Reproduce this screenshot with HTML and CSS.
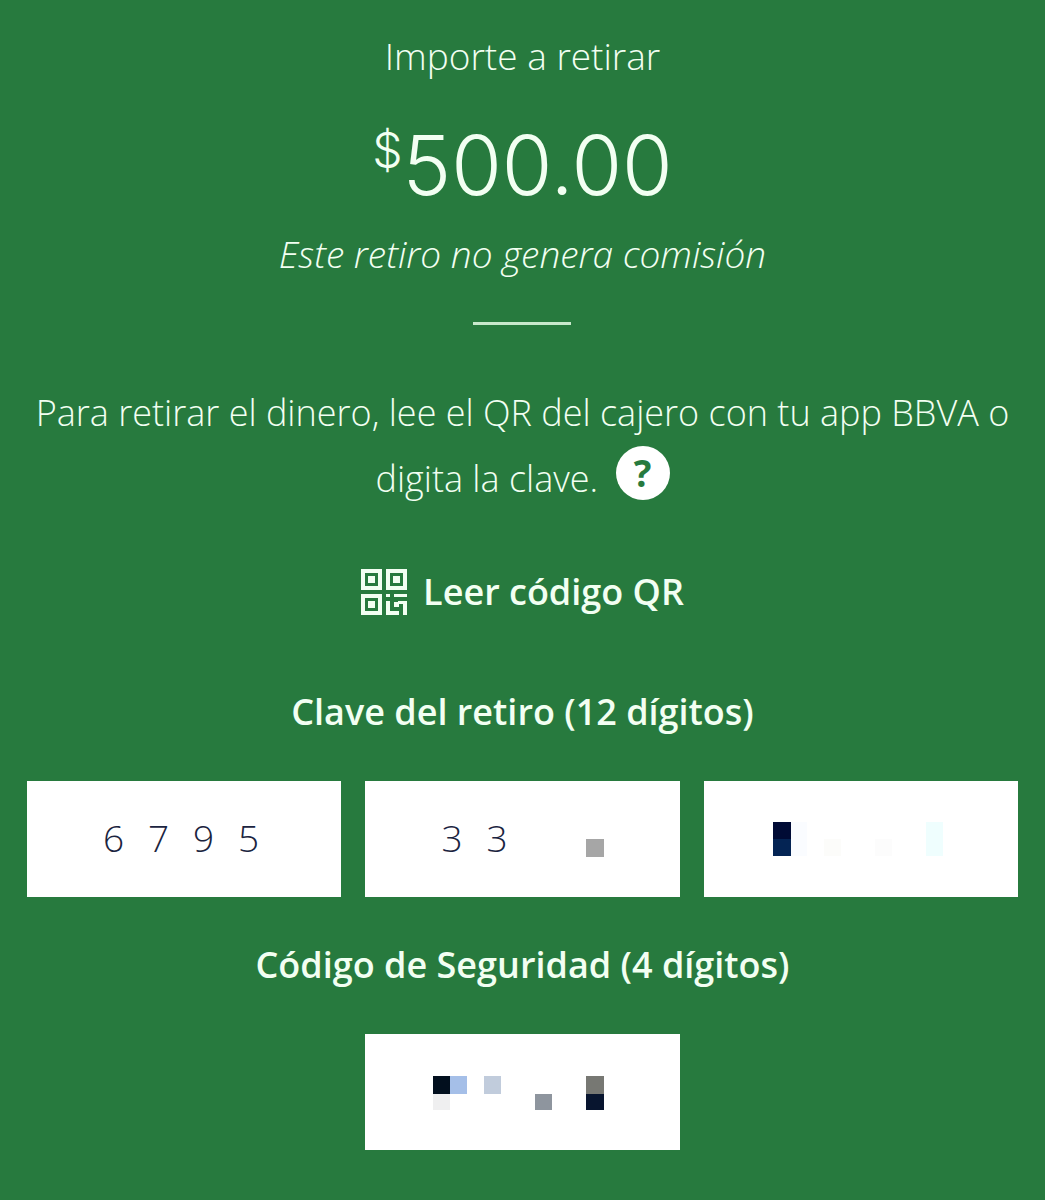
FILE: index.html
```
<!DOCTYPE html>
<html lang="es">
<head>
    <meta charset="UTF-8">
    <meta name="viewport" content="width=device-width, initial-scale=1.0">
    <title>Retiro sin tarjeta</title>
    <link rel="stylesheet" href="styles.css">
</head>
<body>
    <main class="withdrawal">
        <section class="summary">
            <h1 class="summary-title">Importe a retirar</h1>
            <p class="amount"><span class="currency">$</span>500.00</p>
            <p class="fee-note">Este retiro no genera comisión</p>
            <hr class="divider">
        </section>

        <p class="instructions">
            Para retirar el dinero, lee el QR del cajero con tu app BBVA o digita la clave.
            <button class="help-btn" type="button" aria-label="Ayuda">?</button>
        </p>

        <button class="qr-btn" type="button">
            <svg class="qr-icon" viewBox="0 0 46 46" aria-hidden="true">
                <g fill="none" stroke="currentColor" stroke-width="4">
                    <rect x="2" y="2" width="17" height="17"/>
                    <rect x="27" y="2" width="17" height="17"/>
                    <rect x="2" y="27" width="17" height="17"/>
                </g>
                <g fill="currentColor">
                    <rect x="7" y="7" width="7" height="7"/>
                    <rect x="32" y="7" width="7" height="7"/>
                    <rect x="7" y="32" width="7" height="7"/>
                    <rect x="33" y="33" width="5" height="5"/>
                    <rect x="25" y="25" width="4" height="3"/>
                    <path d="M33 25h13v3H33z"/>
                    <path d="M25 32h4v10h9v4H25z"/>
                    <path d="M37 32h9v14h-4V35h-5z"/>
                </g>
            </svg>
            Leer código QR
        </button>

        <section class="code-section">
            <h2 class="code-title">Clave del retiro (12 dígitos)</h2>
            <div class="code-row">
                <div class="code-box">
                    <div class="digits">
                        <span>6</span><span>7</span><span>9</span><span>5</span>
                    </div>
                </div>
                <div class="code-box">
                    <div class="digits">
                        <span>3</span><span>3</span>
                    </div>
                    <svg class="mask" viewBox="0 0 180 36" aria-hidden="true">
                        <rect x="154" y="17" width="18" height="18" fill="#a6a6a6"/>
                    </svg>
                </div>
                <div class="code-box">
                    <svg class="mask" viewBox="0 0 180 36" aria-hidden="true">
                        <rect x="2" y="0" width="18" height="17" fill="#000b35"/>
                        <rect x="2" y="17" width="18" height="17" fill="#042454"/>
                        <rect x="20" y="0" width="16" height="34" fill="#fafcff"/>
                        <rect x="53" y="17" width="17" height="17" fill="#fcfcfa"/>
                        <rect x="104" y="17" width="17" height="17" fill="#fcfcfc"/>
                        <rect x="155" y="0" width="17" height="34" fill="#effefe"/>
                    </svg>
                </div>
            </div>
        </section>

        <section class="code-section">
            <h2 class="code-title">Código de Seguridad (4 dígitos)</h2>
            <div class="code-row code-row-single">
                <div class="code-box">
                    <svg class="mask" viewBox="0 0 180 36" aria-hidden="true">
                        <rect x="1" y="1" width="17" height="18" fill="#020f1e"/>
                        <rect x="18" y="1" width="17" height="18" fill="#a5bfe8"/>
                        <rect x="1" y="19" width="17" height="16" fill="#efeff0"/>
                        <rect x="52" y="1" width="17" height="18" fill="#c1ccdc"/>
                        <rect x="103" y="19" width="17" height="16" fill="#8e959e"/>
                        <rect x="154" y="1" width="18" height="18" fill="#777873"/>
                        <rect x="154" y="19" width="18" height="16" fill="#08152f"/>
                    </svg>
                </div>
            </div>
        </section>
    </main>
</body>
</html>
```

FILE: styles.css
```
* {
    box-sizing: border-box;
}

body {
    margin: 0;
    min-height: 100vh;
    background: #277a3e;
    color: #f2fff2;
    font-family: "Open Sans", "Noto Sans", sans-serif;
    font-size: 36px;
    font-weight: 300;
    line-height: 52px;
}

h1, h2, p {
    margin: 0;
    font-size: inherit;
}

button {
    padding: 0;
    border: none;
    font-family: inherit;
    cursor: pointer;
}

.withdrawal {
    display: flex;
    flex-direction: column;
    align-items: center;
    padding: 30px 27px 48px;
    text-align: center;
}

.summary {
    display: flex;
    flex-direction: column;
    align-items: center;
}

.summary-title {
    font-size: 37px;
    font-weight: 300;
}

.amount {
    display: flex;
    align-items: flex-start;
    margin-top: 32px;
    font-family: Inter, "Open Sans", sans-serif;
    font-size: 82px;
    line-height: 104px;
}

.currency {
    font-size: 48px;
    line-height: 72px;
}

.fee-note {
    margin-top: 10px;
    font-size: 37px;
    font-style: italic;
}

.divider {
    width: 98px;
    height: 3px;
    margin: 42px 0 0;
    border: none;
    background: #c8e8cb;
}

.instructions {
    margin-top: 55px;
    line-height: 66px;
}

.help-btn {
    width: 54px;
    height: 54px;
    margin-left: 8px;
    border-radius: 50%;
    background: #fff;
    color: #277a3e;
    font-size: 37px;
    font-weight: 700;
    line-height: 54px;
    vertical-align: 5px;
}

.qr-btn {
    display: flex;
    align-items: center;
    gap: 16px;
    margin-top: 54px;
    background: none;
    color: #f2fff2;
    font-size: 36px;
    font-weight: 600;
    line-height: 52px;
}

.qr-icon {
    width: 46px;
    height: 46px;
}

.code-section {
    width: 100%;
    margin-top: 42px;
}

.qr-btn + .code-section {
    margin-top: 68px;
}

.code-title {
    font-weight: 600;
}

.code-row {
    display: grid;
    grid-template-columns: repeat(3, 1fr);
    gap: 24px;
    margin-top: 43px;
}

.code-row-single .code-box {
    grid-column: 2;
}

.code-box {
    position: relative;
    display: flex;
    align-items: center;
    justify-content: center;
    height: 116px;
    background: #fff;
    color: #1b2440;
}

.digits {
    display: grid;
    grid-template-columns: repeat(4, 45px);
    padding: 0 6px 2px 0;
    font-size: 37px;
}

/* pixelated cover over the hidden digits */
.mask {
    position: absolute;
    top: 41px;
    left: calc(50% - 90px);
    width: 180px;
    height: 36px;
}
```
